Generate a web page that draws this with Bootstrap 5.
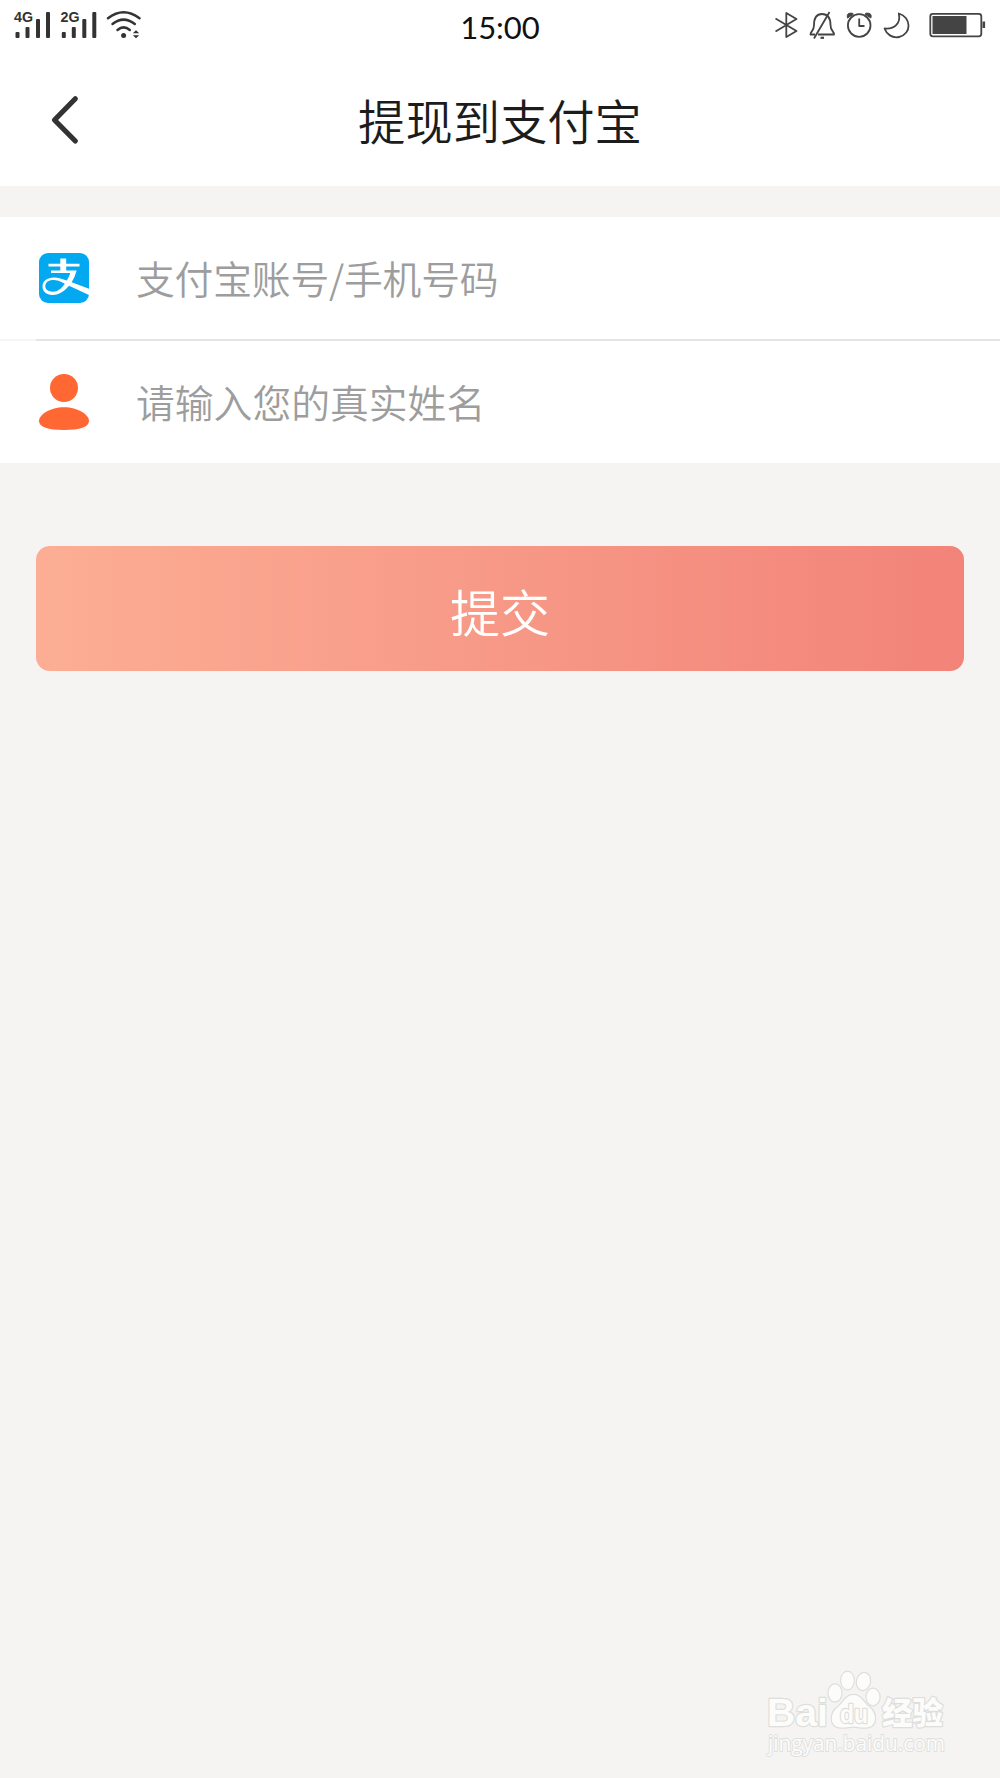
<!DOCTYPE html>
<html lang="zh-CN">
<head>
<meta charset="utf-8">
<meta name="viewport" content="width=device-width, initial-scale=1">
<title>提现到支付宝</title>
<link rel="stylesheet" href="https://cdn.jsdelivr.net/npm/bootstrap@5.3.0/dist/css/bootstrap.min.css">
<style>
body{background:#f5f4f2;font-family:"Noto Sans CJK SC",sans-serif;min-height:1778px;color:#1c1c1c}
.status-bar{height:50px}
.status-bar svg,.title-bar svg,.field-row svg{display:block;flex:none}
.clock{font-family:Lato,"Noto Sans",sans-serif;font-size:31px;line-height:50px;color:#111;padding-top:2px}
.title-bar{height:136px;margin-bottom:31px}
.title-bar h1{font-size:47.3px;font-weight:350;line-height:70px;padding-top:11px;width:300px;white-space:nowrap}
.side-slot{width:350px}
.field-row{height:122px;padding-left:38px}
.field-row input{font-size:38.8px;font-weight:350;height:70px;margin:0 0 2px 46px;color:#333}
.field-row .account-input{letter-spacing:-.2px}
.field-row input::placeholder{color:#9d9d9d;opacity:1}
.field-line{height:2px;background:linear-gradient(90deg,#f5f5f5 36px,#e5e5e5 36px)}
.submit-area{padding:83px 36px 0}
.btn-submit{height:125px;border-radius:14px;background:linear-gradient(90deg,#fcae94,#f28379);font-size:50px;font-weight:350;line-height:70px;padding:2px 0 0;border:0}
.watermark{padding-right:48px;margin-bottom:16px}
</style>
<script src="https://cdn.jsdelivr.net/npm/bootstrap@5.3.0/dist/js/bootstrap.bundle.min.js"></script>
</head>
<body class="d-flex flex-column">
<header class="bg-white">
  <div class="status-bar d-flex justify-content-between">
    <svg width="240" height="50" viewBox="0 0 240 50" fill="#333">
      <g font-family="Liberation Sans,sans-serif" font-weight="700" font-size="14.5">
        <text x="14" y="22.300" textLength="19" lengthAdjust="spacingAndGlyphs">4G</text><text x="60.5" y="22.300" textLength="19" lengthAdjust="spacingAndGlyphs">2G</text>
      </g>
      <g id="bars"><rect x="15.5" y="32" width="4" height="6" rx="1"/><rect x="25.5" y="27" width="4" height="11" rx="1"/><rect x="36" y="19" width="4" height="19" rx="1"/><rect x="46" y="12" width="4" height="26" rx="1"/></g>
      <use href="#bars" x="46.3"/>
      <g fill="none" stroke="#333" stroke-width="2.5" stroke-linecap="round"><path d="M108 18.2Q123.500 6.200 139.500 18.200"/><path d="M112.500 24Q123.500 15.200 134.800 24"/><path d="M117.500 30Q123.500 24.800 129.800 30"/></g>
      <circle cx="123.600" cy="35.500" r="2.500"/><path d="M132.800 33.200L136 30.300L139.200 33.200ZM132.800 35.200H139.200L136 38.200Z"/>
    </svg>
    <div class="clock">15:00</div>
    <svg width="240" height="50" viewBox="760 0 240 50" fill="none" stroke="#444" stroke-width="1.8" stroke-linejoin="round">
      <path d="M775.500 18.500L796.500 31L786.300 37V13L796.500 19L775.500 31.500"/>
      <path d="M815 34.500H810.500C810.500 31 814 31.500 814 25C814 18 816 14 822 14C828 14 830.500 18 830.500 25C830.500 31 834 31 834 34.500H818M829.500 12L814 38.500"/>
      <path d="M820.500 37.800H824" stroke-width="2.200"/>
      <circle cx="859.200" cy="25.500" r="11.300"/><path d="M859.200 18.500V26H864.500"/>
      <path d="M847.500 18Q846 12.500 852.500 13.200L853.300 14.300ZM870.900 18Q872.400 12.500 865.900 13.200L865.100 14.300Z" fill="#444" stroke-width="1"/>
      <path d="M898.800 13.500C911.500 17 912 34 899 37C892 38.500 886.500 34 884.500 28.500C895 29.500 901 23 898.800 13.500Z"/>
      <rect x="930.300" y="13.800" width="51" height="22.500" rx="2.500"/><rect x="932.500" y="16" width="34" height="18" fill="#444" stroke="none"/><rect x="982.500" y="21.500" width="2.600" height="6.500" fill="#444" stroke="none"/>
    </svg>
  </div>
</header>
<nav class="title-bar bg-white d-flex" aria-label="导航">
  <div class="side-slot"><svg width="120" height="136" viewBox="0 50 120 136" fill="none" stroke="#333" stroke-width="5.200" stroke-linecap="round" stroke-linejoin="round"><path d="M75.300 98.800L54.500 120L75.300 141"/></svg></div>
  <h1 class="text-center mb-0 mt-4">提现到支付宝</h1>
</nav>
<form>
  <div class="bg-white">
    <label class="field-row d-flex align-items-center">
      <svg width="52" height="52" viewBox="0 0 52 52"><defs><clipPath id="tile"><rect x="1" y="1" width="50" height="50" rx="9"/></clipPath></defs>
        <g clip-path="url(#tile)"><rect x="1" y="1" width="50" height="50" fill="#02a9f1"/>
        <path d="M22.300 6.500H28.200V11.700H41.500V14.400H28.200V18.400H38.700Q37 24.500 33.700 30.200L52 37V43.500L31 33.800C25.500 40.500 20 43 14.500 43C8 43 4.500 39 4.500 34.500C4.500 29 9 25.500 16 25.500C20.500 25.500 24.500 27 28.800 28.600Q31 25 32.300 21H13V18.400H22.300V14.400H10.500V11.700H22.300Z" fill="#fff"/>
        <path d="M26.800 31.700C21.500 28.800 18 27.800 14.500 28C9.500 28.300 7.300 31 7.300 34.300C7.300 37.700 10.500 39.700 14.800 39.700C19.500 39.700 23.500 36.500 26.800 31.700Z" fill="#02a9f1"/></g></svg>
      <input class="account-input form-control border-0 shadow-none bg-transparent p-0" type="text" placeholder="支付宝账号/手机号码">
    </label>
    <div class="field-line"></div>
    <label class="field-row d-flex align-items-center">
      <svg width="52" height="58" viewBox="0 -1 52 58" fill="#ff6733"><circle cx="26" cy="14" r="14"/><path d="M1 47C1 40.500 12 33.200 26 33.200S51 40.500 51 47C51 53 42 56 26 56S1 53 1 47Z"/></svg>
      <input class="form-control border-0 shadow-none bg-transparent p-0" type="text" placeholder="请输入您的真实姓名">
    </label>
  </div>
  <div class="submit-area"><button type="button" class="btn btn-submit w-100 text-white d-flex align-items-center justify-content-center">提交</button></div>
</form>
<footer class="watermark mt-auto d-flex justify-content-end">
  <svg width="190" height="92" viewBox="762 1670 190 92" fill="#fcfcfb" stroke="#dededc" stroke-width="2.400" paint-order="stroke" stroke-linejoin="round">
    <text x="767" y="1726" font-family="Liberation Sans,sans-serif" font-weight="700" font-size="39" textLength="61" lengthAdjust="spacingAndGlyphs">Bai</text>
    <ellipse cx="835" cy="1693" rx="6.500" ry="8.500"/><ellipse cx="847.500" cy="1680.500" rx="6.300" ry="8.700"/><ellipse cx="863.500" cy="1681.500" rx="6.500" ry="8.500" transform="rotate(12 863.500 1681.500)"/><ellipse cx="873" cy="1697" rx="6.500" ry="8.200"/>
    <path d="M853.500 1695C861 1695 863 1702 869 1707C877 1713 878 1727 866 1727.500C860 1728 857 1726.500 853.500 1726.500S845 1728 840 1727.500C829 1726 830 1713 838 1707C844 1702 846 1695 853.500 1695Z"/>
    <text x="840" y="1722.500" font-family="Liberation Sans,sans-serif" font-weight="700" font-size="25" textLength="28" lengthAdjust="spacingAndGlyphs">du</text>
    <text x="882" y="1724" font-family="Noto Sans CJK SC,sans-serif" font-weight="900" font-size="31" textLength="61" lengthAdjust="spacingAndGlyphs">经验</text>
    <text x="768" y="1750.500" font-family="Open Sans,Noto Sans,sans-serif" font-size="21" stroke-width="1.800" textLength="177" lengthAdjust="spacingAndGlyphs">jingyan.baidu.com</text>
  </svg>
</footer>
</body>
</html>
